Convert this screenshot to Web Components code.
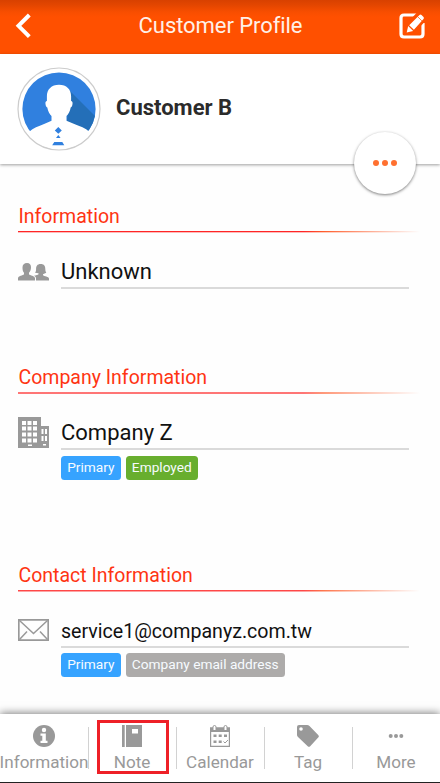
<!DOCTYPE html>
<html lang="en">
<head>
<meta charset="utf-8">
<title>Customer Profile</title>
<style>
html,body{margin:0;height:100%;overflow:hidden;background:#fefefe}
body{font-family:Roboto,"Liberation Sans",sans-serif;color:#111}
</style>
</head>
<body>
<profile-app></profile-app>
<script>
function define(name, html) {
  const t = document.createElement('template');
  t.innerHTML = html;
  customElements.define(name, class extends HTMLElement {
    constructor() {
      super();
      this.attachShadow({ mode: 'open' }).append(t.content.cloneNode(true));
    }
  });
}

define('app-header', `
<style>
:host{display:flex;align-items:center;justify-content:space-between;box-sizing:border-box;height:53.5px;flex:none;padding:0 14px 1px 15px;color:#fff;
background:linear-gradient(#d84100 0,#e34600 5px,#f84e00 12px,#ff5000 17px);}
h1{margin:0 0 0 9px;font-size:22px;font-weight:400;line-height:26px;letter-spacing:-.07px;color:#fff0e8;white-space:nowrap}
svg{display:block}
</style>
<svg width="18" height="26" viewBox="0 0 18 26"><path d="M14.3 2 3.5 12.8 14.3 23.6" fill="none" stroke="#fff" stroke-width="4"/></svg>
<h1><slot></slot></h1>
<svg width="27" height="26" viewBox="0 0 27 26"><path d="M17.500 2H5Q2 2 2 5v16q0 3 3 3h16q3 0 3-3V10" fill="none" stroke="#fff" stroke-width="3.200"/><path d="M18.500-1 27 7.500 17 18 6 20 8 10Z" fill="#ff5000"/><path d="M7.700 19.500 9.200 13l5 5Z" fill="#fff"/><path d="M10.200 12.300 20.500 1.900q1-.9 2 0l2 2q.9 1 0 2L14.900 16.700Z" fill="#fff"/><path d="m18.500 3.500 4.400 4.400" stroke="#ff5000" stroke-width=".7"/></svg>
`);

define('user-avatar', `
<style>:host{display:block;width:84px;height:84px}svg{display:block}</style>
<svg width="84" height="84" viewBox="0 0 84 84">
<defs><clipPath id="c"><circle cx="42" cy="42" r="36.600"/></clipPath><clipPath id="d"><circle cx="42" cy="42" r="40"/></clipPath></defs>
<circle cx="42" cy="42" r="41" fill="#fff" stroke="#ccc" stroke-width="1.200"/>
<g clip-path="url(#c)">
<rect width="84" height="84" fill="#3080df"/>
<path d="M52 23 84 55V84H48Z" fill="#246fb8"/>
</g>
<path clip-path="url(#d)" d="M42 17.700c7.500 0 12.100 4.700 12.100 11.400v5c1.300.2 1.600 1.400 1.400 2.800-.2 1.800-.7 3.100-1.800 3.500-.7 4-2.300 6.500-4.200 8.600v4.800q10 4 16 6.500 4 1.800 6.500 4.200L84 73V84H0V73L12.500 64.500q2.500-2.400 6.500-4.200 6-2.500 15.500-6.500V49c-1.900-2.100-3.500-4.600-4.200-8.600-1.100-.4-1.600-1.700-1.800-3.500-.2-1.400.1-2.600 1.400-2.800v-5c0-6.700 4.600-11.400 12.100-11.400Z" fill="#fff"/>
<path d="M41.300 60 44.800 63.400 41.300 66.800 37.800 63.400ZM41.300 68 43.600 71H39ZM37.300 75H45.300L47.300 78.300H35.200Z" fill="#3080df"/>
</svg>
`);

define('profile-card', `
<style>
:host{display:flex;align-items:center;box-sizing:border-box;height:110.500px;flex:none;padding:0 0 0 16.500px;gap:15.500px;position:relative;background:#fff;box-shadow:0 1px 3px rgba(0,0,0,.38)}
h2{margin:0 0 1px;font-size:22px;line-height:26px;font-weight:700;color:#2b2b2b}
button{position:absolute;right:24px;bottom:-30px;width:62px;height:62px;border:0;border-radius:50%;padding:0;background:#fff;box-shadow:0 1px 3px rgba(0,0,0,.5);display:flex;align-items:center;justify-content:center;gap:2.500px}
i{width:6.200px;height:6.200px;border-radius:50%;background:#ff7030}
</style>
<user-avatar></user-avatar><h2><slot></slot></h2><button aria-label="Actions"><i></i><i></i><i></i></button>
`);

define('info-section', `
<style>
:host{display:block;padding-left:18px}
h3{margin:0;padding:1px 0 0 .5px;font-size:19.500px;line-height:24px;font-weight:400;color:#ff3412}
.rule{height:2px;margin:2px 20px 0 0}
.rule::before,.rule::after{content:"";display:block;height:1px;opacity:var(--upper,.95);background:linear-gradient(90deg,#ff1a1a 0,#ff1a1a 71%,#ff5522 76%,rgba(255,85,34,0) 100%)}
.rule::after{opacity:var(--lower,.3)}
</style>
<h3><slot name="title"></slot></h3><div class="rule"></div><slot></slot>
`);

define('info-row', `
<style>
:host{display:grid;grid-template-columns:31px 348px;column-gap:12px;padding-top:26px}
.icon{display:flex;align-items:center;height:var(--iconbox,25px)}
.value{height:26px;font-size:22px;line-height:26px;padding-bottom:2px;border-bottom:2px solid #dadada;white-space:nowrap}
.tags{grid-column:2;display:flex;gap:5px;padding-top:var(--tagtop,6px)}
</style>
<div class="icon"><slot name="icon"></slot></div><div class="value"><slot></slot></div><div class="tags"><slot name="tag"></slot></div>
`);

define('tag-chip', `
<style>
:host{display:block;box-sizing:border-box;height:24px;padding:0 6.200px;border-radius:3.500px;background:var(--chip);color:#f7fbff;font-size:13.700px;line-height:22px;white-space:nowrap}
</style><slot></slot>
`);

define('tab-item', `
<style>
:host{display:flex;flex-direction:column;align-items:center;flex:1 1 0;min-width:0;padding-top:10px;color:#999;font-size:17.100px;position:relative}
.icon{height:24px;display:flex;align-items:center}
.label{line-height:22px;margin-top:3px;white-space:nowrap}
:host(:not(:last-child))::after{content:"";position:absolute;right:-1px;top:13px;width:1.300px;height:42px;background:#d2d2d2}
:host([selected])::before{content:"";position:absolute;left:8.500px;top:5.500px;width:66px;height:48px;border:3px solid #ee2028}
</style>
<div class="icon"><slot name="icon"></slot></div><div class="label"><slot></slot></div>
`);

define('tab-bar', `
<style>
:host{display:flex;box-sizing:border-box;height:69px;flex:none;border-bottom:1px solid #222;background:#fff;box-shadow:0 -1px 8px rgba(0,0,0,.5);position:relative}
</style><slot></slot>
`);

define('profile-app', `
<style>
:host{display:flex;flex-direction:column;width:440px;height:783px;overflow:hidden}
main{flex:1;min-height:0;display:flex;flex-direction:column;padding-top:40px}
.s1{height:161px}.s2{height:198px}
svg{display:block}
</style>
<app-header>Customer Profile</app-header>
<profile-card>Customer B</profile-card>
<main>
<info-section class="s1"><span slot="title">Information</span>
<info-row><svg slot="icon" width="31" height="20" viewBox="0 0 31 20" fill="#999"><path d="M9 1c2.800 0 4 1.700 4 4.200 0 2.500-.8 4.200-2 5.500v1.500c.8 1.200 6 1.700 6 4V18.500H0V16.200c0-2.300 5.200-2.800 6-4v-1.500C4.800 9.400 4.500 7.700 4.500 5.200 4.500 2.700 6.200 1 9 1Z"/><path d="M22.700 2c3.600 0 4.600 2.200 4.600 5 0 2.200.7 3 1 3.800l-3.300 1.400v1c1 1 6 1.300 6 3.300v2H18v-2c0-1.400-1-2.200-2-2.700 2-.6 4-.9 4.500-1.600v-1L17 10.800c.5-.8 1.100-1.600 1.100-3.800 0-2.800 1-5 4.600-5Z"/></svg>Unknown</info-row>
</info-section>
<info-section class="s2" style="--upper:.6;--lower:.6"><span slot="title">Company Information</span>
<info-row><svg slot="icon" width="31" height="31" viewBox="0 0 31 31" style="flex:none"><path d="M0 0H23V9H31V31H0Z" fill="#999"/><path d="M4 4h4v4H4zm5.500 0h4v4h-4zm5.500 0h4v4h-4zM4 9.500h4v4H4zm5.500 0h4v4h-4zm5.500 0h4v4h-4zM4 15.500h4v4H4zm5.500 0h4v4h-4zm5.500 0h4v4h-4zM4 21.500h4v4H4zm5.500 0h4v4h-4zm5.500 0h4v4h-4zM10 27.500h4v1.500h-4zM23.500 12h2v5h-2zm3.500 0h2v5h-2zm-3.500 7h2v5h-2zm3.500 0h2v5h-2zm-2 8h3v1.500h-3z" fill="#fff"/></svg>Company Z<tag-chip slot="tag" style="--chip:#36a3ff">Primary</tag-chip><tag-chip slot="tag" style="--chip:#68ae2e">Employed</tag-chip></info-row>
</info-section>
<info-section style="--upper:.8;--lower:.4"><span slot="title">Contact Information</span>
<info-row style="--tagtop:5px;--iconbox:24px"><svg slot="icon" width="31" height="22" viewBox="0 0 31 22" fill="none" stroke="#999"><path d="M.8.800H30.200V21.200H.8Z" stroke-width="1.700"/><path d="m1.500 1.500 14 13 14-13M1.500 20.500l7.500-8M29.500 20.500l-7.500-8" stroke-width="1.500"/></svg><span style="font-size:19.600px">service1@companyz.com.tw</span><tag-chip slot="tag" style="--chip:#36a3ff">Primary</tag-chip><tag-chip slot="tag" style="--chip:#adabaa">Company email address</tag-chip></info-row>
</info-section>
</main>
<tab-bar>
<tab-item><svg slot="icon" width="22" height="22" viewBox="0 0 22 22"><circle cx="11" cy="11" r="11" fill="#999"/><circle cx="11" cy="5" r="2.200" fill="#fff"/><path d="M7.500 8.500h5.300v7.300h1.700V18h-7v-2.200h1.800v-5.100H7.500Z" fill="#fff"/></svg>Information</tab-item>
<tab-item selected><svg slot="icon" width="20" height="22" viewBox="0 0 20 22" fill="#999"><path d="M0 0h2.700v22H0zM4 0h16v22H4z"/><path d="M10 4h6v4.500h-6z" fill="#fff"/></svg>Note</tab-item>
<tab-item><svg slot="icon" width="20" height="22" viewBox="0 0 20 22"><path d="M.6 3H19.400V21.400H.6Z" fill="#fff" stroke="#999" stroke-width="1.200"/><path d="M0 2.500H20V7H0Z" fill="#999"/><path d="M3 5V2q0-1.500 1.500-1.500T6 2v3M14 5V2q0-1.500 1.500-1.500T17 2v3" fill="#fff" stroke="#999" stroke-width="1"/><path d="M3.500 9.500h3V12h-3zm5.200 0h3V12h-3zm5.300 0h3V12h-3zM3.500 15.500h3V18h-3zm5.200 0h3V18h-3z" fill="#999"/><path d="m13.500 16.500 1.500 1.500 3-3" fill="none" stroke="#999"/></svg>Calendar</tab-item>
<tab-item><svg slot="icon" width="22" height="22" viewBox="0 0 22 22"><path d="M2 0h8q1.500 0 2.500 1l8.700 9q1.300 1.300 0 2.600l-8 8.600q-1.200 1.200-2.500 0L1 12Q0 11 0 10V2Q0 0 2 0Z" fill="#999"/><circle cx="4" cy="4" r="1.800" fill="#fff"/></svg>Tag</tab-item>
<tab-item><svg slot="icon" width="16" height="6" viewBox="0 0 16 6" fill="#999"><circle cx="2.700" cy="3" r="2"/><circle cx="8" cy="3" r="2"/><circle cx="13.300" cy="3" r="2"/></svg>More</tab-item>
</tab-bar>
`);
</script>
</body>
</html>
